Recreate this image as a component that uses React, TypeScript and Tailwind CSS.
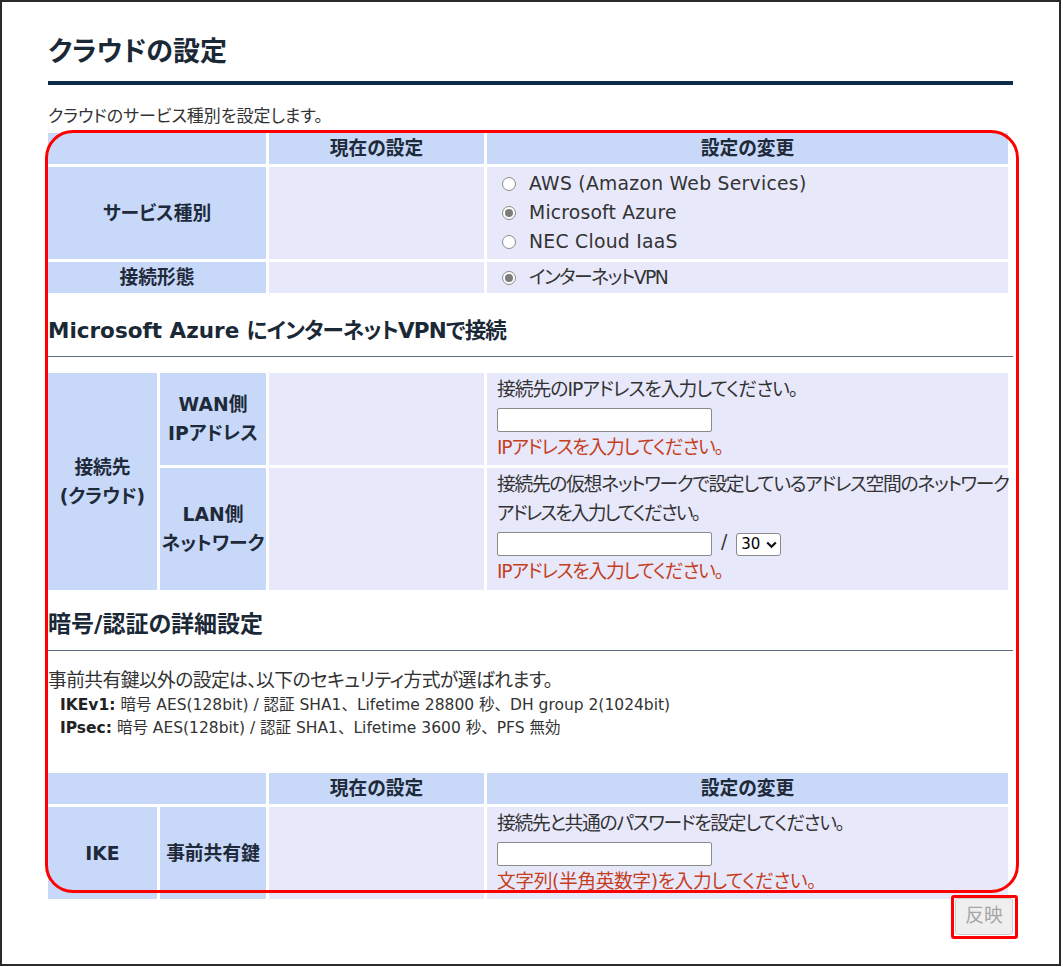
import React from "react";

function Radio({ checked }: { checked?: boolean }) {
  return checked ? (
    <span className="flex h-[14px] w-[14px] shrink-0 items-center justify-center rounded-full border border-[#8a8a8a] bg-white">
      <span className="h-[8px] w-[8px] rounded-full bg-[#7b7b7b]" />
    </span>
  ) : (
    <span className="h-[14px] w-[14px] shrink-0 rounded-full border border-[#8a8a8a] bg-white" />
  );
}

function Input() {
  return <span className="block h-[24px] w-[215px] rounded-[2px] border border-[#8a8a8a] bg-white" />;
}

const H = "flex items-center justify-center bg-[#c7d8f9] font-bold text-[#1e2a39]";
const D = "bg-[#e8e8fb]";

export default function App() {
  return (
    <div className="h-[967px] w-[1063px] bg-white">
      <div className="relative h-[966px] w-[1061px] border-2 border-[#2a2a2a] bg-white font-['DejaVu_Sans','Noto_Sans_CJK_JP',sans-serif] text-[18.75px] text-[#333] [font-feature-settings:'palt']">
        <div className="w-[1011px] pl-[46px] pt-[32px]">
          <h1 className="text-[27px] font-bold leading-[36px] text-[#1b2836]">クラウドの設定</h1>
          <div className="mt-[11px] h-[4px] bg-[#0c2c4c]" />
          <p className="mt-[20px] text-[17px] leading-[22px]">クラウドのサービス種別を設定します。</p>

          {/* Table 1 */}
          <div className="mt-[6px] grid w-[960px] grid-cols-[109px_106px_215px_521px] gap-[3px] leading-[29px]">
            <div className={`col-span-2 h-[31px] ${H}`} />
            <div className={`h-[31px] ${H}`}>現在の設定</div>
            <div className={`h-[31px] ${H}`}>設定の変更</div>

            <div className={`col-span-2 h-[92px] ${H}`}>サービス種別</div>
            <div className={D} />
            <div className={`${D} flex flex-col pl-[15px] pt-[2px]`}>
              <div className="flex h-[29px] items-center gap-[13px]">
                <Radio />
                <span className="tracking-[0.28px]">AWS (Amazon Web Services)</span>
              </div>
              <div className="flex h-[29px] items-center gap-[13px]">
                <Radio checked />
                <span className="tracking-[0.2px]">Microsoft Azure</span>
              </div>
              <div className="flex h-[29px] items-center gap-[13px]">
                <Radio />
                <span className="tracking-[0.28px]">NEC Cloud IaaS</span>
              </div>
            </div>

            <div className={`col-span-2 h-[31px] ${H}`}>接続形態</div>
            <div className={D} />
            <div className={`${D} flex items-center gap-[13px] pl-[15px]`}>
              <Radio checked />
              <span className="tracking-[-1.5px]">インターネットVPN</span>
            </div>
          </div>

          <h2 className="mt-[23px] text-[21.5px] font-bold leading-[30px] text-[#1b2836]">
            Microsoft Azure <span className="tracking-[-0.8px]">にインターネットVPNで接続</span>
          </h2>
          <div className="mt-[10px] h-px bg-[#5b6d7e]" />

          {/* Table 2 */}
          <div className="mt-[16px] grid w-[960px] grid-cols-[109px_106px_215px_521px] gap-[3px] leading-[29px]">
            <div className={`row-span-2 flex-col text-center ${H}`}>
              <span>接続先</span>
              <span>(クラウド)</span>
            </div>
            <div className={`flex-col text-center ${H}`}>
              <span>WAN側</span>
              <span>IPアドレス</span>
            </div>
            <div className={D} />
            <div className={`${D} h-[92px] pl-[10px] pt-[2px]`}>
              <div className="h-[29px] whitespace-nowrap tracking-[-0.95px]">接続先のIPアドレスを入力してください。</div>
              <div className="flex h-[29px] items-end pb-[1px]">
                <Input />
              </div>
              <div className="h-[29px] whitespace-nowrap tracking-[-1.2px] text-[#c53f1f]">IPアドレスを入力してください。</div>
            </div>

            <div className={`flex-col text-center ${H}`}>
              <span>LAN側</span>
              <span>ネットワーク</span>
            </div>
            <div className={D} />
            <div className={`${D} h-[122px] pl-[10px] pt-[2px]`}>
              <div className="h-[29px] whitespace-nowrap tracking-[-1.3px]">接続先の仮想ネットワークで設定しているアドレス空間のネットワーク</div>
              <div className="h-[29px] whitespace-nowrap tracking-[-1.85px]">アドレスを入力してください。</div>
              <div className="flex h-[29px] items-end pb-[1px]">
                <Input />
                <span className="mx-[9px] self-center leading-[24px]">/</span>
                <span className="flex h-[23px] w-[45px] items-center rounded-[3px] border border-[#8a8a8a] bg-white pl-[4px] text-[15px] leading-none text-black">
                  30
                  <svg className="ml-[6px]" width="11" height="8" viewBox="0 0 11 8">
                    <path d="M1.2 1.5 L5.5 5.8 L9.8 1.5" fill="none" stroke="#111" strokeWidth="2.2" />
                  </svg>
                </span>
              </div>
              <div className="h-[29px] whitespace-nowrap tracking-[-1.2px] text-[#c53f1f]">IPアドレスを入力してください。</div>
            </div>
          </div>

          <h2 className="mt-[19px] text-[23px] font-bold leading-[30px] text-[#1b2836]">暗号/認証の詳細設定</h2>
          <div className="mt-[11px] h-px bg-[#5b6d7e]" />
          <p className="mt-[17px] leading-[26px] tracking-[-0.57px]">事前共有鍵以外の設定は、以下のセキュリティ方式が選ばれます。</p>
          <div className="pl-[12px] text-[15.5px] leading-[23px] [font-feature-settings:normal]">
            <div>
              <b className="text-[#222]">IKEv1:</b> 暗号 AES(128bit) / 認証 SHA1、Lifetime 28800 秒、DH group 2(1024bit)
            </div>
            <div>
              <b className="text-[#222]">IPsec:</b> 暗号 AES(128bit) / 認証 SHA1、Lifetime 3600 秒、PFS 無効
            </div>
          </div>

          {/* Table 3 */}
          <div className="mt-[33px] grid w-[960px] grid-cols-[109px_106px_215px_521px] gap-[3px] leading-[29px]">
            <div className={`col-span-2 h-[31px] ${H}`} />
            <div className={`h-[31px] ${H}`}>現在の設定</div>
            <div className={`h-[31px] ${H}`}>設定の変更</div>

            <div className={H}>IKE</div>
            <div className={H}>事前共有鍵</div>
            <div className={D} />
            <div className={`${D} h-[92px] pl-[10px] pt-[2px]`}>
              <div className="h-[29px] whitespace-nowrap tracking-[-1.3px]">接続先と共通のパスワードを設定してください。</div>
              <div className="flex h-[29px] items-end pb-[1px]">
                <Input />
              </div>
              <div className="h-[29px] whitespace-nowrap tracking-[-0.4px] text-[#c53f1f]">文字列(半角英数字)を入力してください。</div>
            </div>
          </div>

          <div className="flex justify-end">
            <span className="mt-[-1px] flex h-[37px] w-[58px] items-center justify-center rounded-[3px] border border-[#cfcfcf] bg-[#efefef] text-[#a6a6a6]">
              反映
            </span>
          </div>
        </div>

        {/* annotations */}
        <div className="pointer-events-none absolute left-[43px] top-[128px] h-[763px] w-[974px] rounded-[28px] border-[3px] border-[#ff0000]" />
        <div className="pointer-events-none absolute left-[949px] top-[893px] h-[44px] w-[67px] rounded-[3px] border-[3px] border-[#ff0000]" />
      </div>
    </div>
  );
}
